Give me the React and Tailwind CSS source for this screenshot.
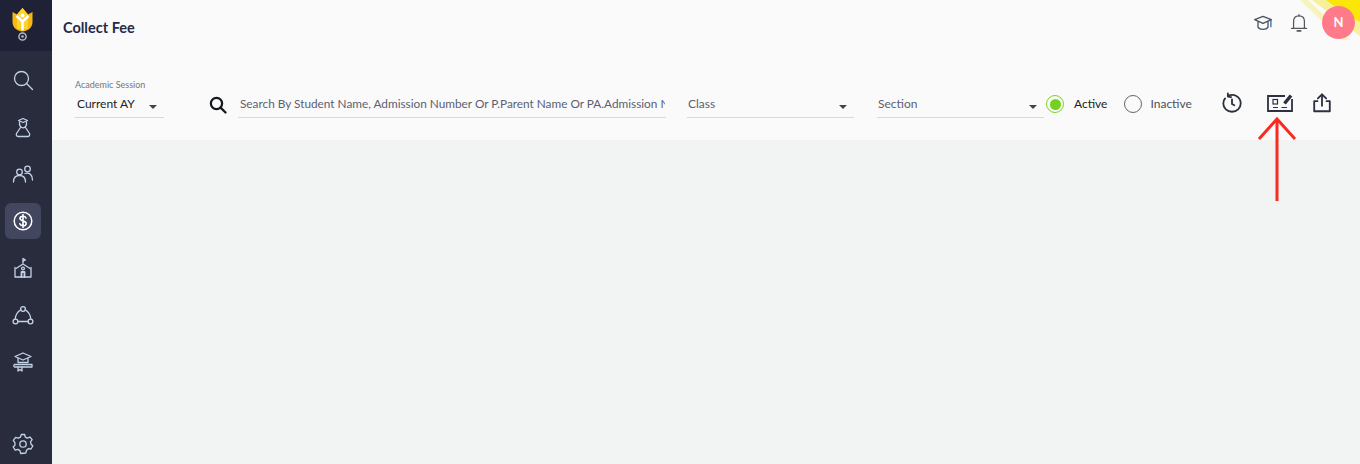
const font = "font-['Lato','Noto_Sans',sans-serif]"

function Caret() {
  return <span className="block w-0 h-0 border-x-[4px] border-x-transparent border-t-[4px] border-t-[#444]" />
}

function NavIcon({ children, active }) {
  return (
    <div className={`w-9 h-9 flex items-center justify-center rounded-md ${active ? 'bg-[#42465f]' : ''}`}>
      <svg width="24" height="24" viewBox="0 0 24 24" fill="none" stroke="#c3d2e6" strokeWidth="1.3" strokeLinecap="round" strokeLinejoin="round">
        {children}
      </svg>
    </div>
  )
}

function Sidebar() {
  return (
    <div className="w-[52px] shrink-0 h-[464px] bg-[#282c3c] flex flex-col items-start">
      <div className="w-full h-[51px] bg-[#1f2137] flex items-start pl-[12px] pt-[7px] shrink-0">
        <svg width="21" height="34" viewBox="0 0 21 34">
          <path d="M0.5 5 L5 7.5 L10.5 1 L16 7.5 L20.5 5 L20.5 15 C20.5 21 15 24.5 10.5 24.5 C6 24.5 0.5 21 0.5 15 Z" fill="#f5b90f" />
          <path d="M5 7.5 L10.5 1 L16 7.5 L16 22 L5 22 Z" fill="#fbd234" />
          <path d="M4.5 9 L10.5 14.5 L16.5 9 M10.5 14.5 L10.5 23.5" stroke="#fff" strokeWidth="2.4" fill="none" />
          <circle cx="10.5" cy="8.5" r="2" fill="#fff" />
          <circle cx="10.5" cy="29.5" r="3.6" fill="none" stroke="#b9b9c2" strokeWidth="1.5" />
          <circle cx="10.5" cy="29.5" r="1.3" fill="#b9b9c2" />
        </svg>
      </div>
      <div className="flex flex-col items-center gap-[11px] mt-[11px] pl-[5px]">
        <NavIcon>
          <circle cx="10.5" cy="10.5" r="7" />
          <path d="M15.8 15.8 L21.5 21.5" />
        </NavIcon>
        <NavIcon>
          <path d="M7.5 5.5 L12 3.5 L16.5 5.5 L12 7.5 Z" />
          <path d="M8.5 7 C8 11 10 12.8 12 12.8 C14 12.8 16 11 15.5 7" />
          <path d="M9.5 12.5 L5.5 18.5 C4.8 20.5 6 21.5 7.5 21.5 L16.5 21.5 C18 21.5 19.2 20.5 18.5 18.5 L14.5 12.5" />
        </NavIcon>
        <NavIcon>
          <circle cx="8.5" cy="10" r="2.8" />
          <circle cx="16.5" cy="7" r="2.8" />
          <path d="M2.5 20 C2.5 15.5 5 13.5 8.5 13.5 C12 13.5 14.5 15.5 14.5 20" />
          <path d="M14 11.5 C18 10 21.5 12.5 21.5 18" />
        </NavIcon>
        <NavIcon active>
          <g stroke="#fff">
            <circle cx="12" cy="12" r="8.8" strokeWidth="1.5" />
            <path d="M15 9 C14.5 7.8 13.4 7.3 12 7.3 C10.3 7.3 9 8.2 9 9.6 C9 12.6 15.2 11.4 15.2 14.4 C15.2 15.8 13.8 16.7 12 16.7 C10.4 16.7 9.2 16 8.8 14.8 M12 5.5 L12 18.5" strokeWidth="1.6" />
          </g>
        </NavIcon>
        <NavIcon>
          <path d="M12 2.5 L14.5 4 L12 5 Z" />
          <path d="M12 5 L12 7" />
          <path d="M5 12.5 L12 8 L19 12.5" />
          <path d="M4 11.5 L4 21 L20 21 L20 11.5" />
          <circle cx="12" cy="12.5" r="1.4" />
          <path d="M10.5 21 L10.5 16 L13.5 16 L13.5 21" strokeWidth="1.8" />
        </NavIcon>
        <NavIcon>
          <circle cx="12" cy="6" r="2.4" />
          <circle cx="4.5" cy="18.5" r="2.4" />
          <circle cx="19.5" cy="18.5" r="2.4" />
          <path d="M7 18.5 L17 18.5 M9.8 6.8 C6.5 8.8 4.5 12 4.2 16 M14.2 6.8 C17.5 8.8 19.5 12 19.8 16" />
        </NavIcon>
        <NavIcon>
          <path d="M12 3 L20 6.5 L12 10 L4 6.5 Z" />
          <path d="M7 8.5 L7 12.5 L17 12.5 L17 8.5" />
          <path d="M3.5 14.5 L21 14.5 L21 17 L3.5 17 C2.5 16.5 2.5 15 3.5 14.5 Z" />
          <path d="M7 17 L7 21 L9 19.5 L11 21 L11 17" />
        </NavIcon>
      </div>
      <div className="mt-auto mb-[2px] pl-[5px]">
        <NavIcon>
          <circle cx="12" cy="12" r="3.2" />
          <path d="M10.3 2.5 L13.7 2.5 L14.3 5.2 L16.4 6.2 L18.9 5 L21.2 7.6 L19.5 9.8 L20 12 L21.8 14 L20 17 L17.5 16.6 L15.6 18.2 L14.8 21 L9.7 21.5 L8.9 18.6 L6.9 17.4 L4.2 18.2 L2.2 15 L4 13 L3.9 10.6 L2.3 8.4 L4.6 5.3 L7.3 6.2 L9.5 5.1 Z" />
        </NavIcon>
      </div>
    </div>
  )
}

function Filter({ label, width }) {
  return (
    <div className={`${width} h-[37px] pt-[10px] pb-[1px] border-b border-[#d9d9d9] flex items-center justify-between pl-[1px] pr-[7px] text-[12px] text-[#5c6070]`}>
      <span>{label}</span>
      <span className="pt-[6px]"><Caret /></span>
    </div>
  )
}

export default function App() {
  return (
    <div className={`relative w-[1360px] h-[464px] overflow-hidden flex bg-[#f2f4f3] ${font}`}>
      <Sidebar />
      <div className="flex-1 flex flex-col">
        <div className="bg-[#fafafa] h-[140px]">
          {/* Header */}
          <div className="flex items-center justify-between h-[51px] pl-[11px] pr-[5px]">
            <h1 className="text-[14.5px] font-bold text-[#232b4b] pt-[4px]">Collect Fee</h1>
            <div className="flex items-center pb-[6px]">
              <svg width="20" height="20" viewBox="0 0 24 24" fill="none" stroke="#4a5160" strokeWidth="1.6" strokeLinejoin="round" className="mr-[16px]">
                <path d="M2 8 L12 4 L22 8 L12 12.5 Z" />
                <path d="M6 10 L6 17 C8 20.5 16 20.5 18 17 L18 10" />
                <path d="M21.5 8.5 L21.5 17" stroke="#3d6da8" />
              </svg>
              <svg width="20" height="22" viewBox="0 0 24 24" fill="none" stroke="#55585f" strokeWidth="1.5" strokeLinecap="round" strokeLinejoin="round" className="mr-[13px]">
                <path d="M5.5 18.5 L5.5 10 C5.5 6 8.2 3.5 12 3.5 C15.8 3.5 18.5 6 18.5 10 L18.5 18.5" />
                <path d="M3 18.5 L21 18.5" />
                <path d="M10 21.5 L14 21.5" strokeWidth="2" />
                <path d="M12 2 L12 3.5" />
              </svg>
              <div className="relative z-10 w-[33px] h-[33px] rounded-full bg-[#ff7b8a] text-white flex items-center justify-center text-[13px] font-bold">N</div>
            </div>
          </div>

          {/* Filter bar */}
          <div className="flex items-start pl-[23px] pt-[30px]">
            <div className="w-[89px] h-[38px] border-b border-[#d9d9d9] mr-[45px] -mt-[1px]">
              <div className="text-[9px] leading-[10px] text-[#777]">Academic Session</div>
              <div className="flex items-center justify-between pl-[2px] pr-[7px] mt-[5px] text-[12px] leading-[18px] text-[#222]">
                <span>Current AY</span>
                <span className="pt-[5px]"><Caret /></span>
              </div>
            </div>
            <svg width="18" height="18" viewBox="0 0 24 24" fill="none" stroke="#15171f" strokeWidth="3" strokeLinecap="round" className="mr-[11px] mt-[15px]">
              <circle cx="10" cy="10" r="7.5" />
              <path d="M15.5 15.5 L22 22" />
            </svg>
            <div className="w-[428px] h-[37px] pt-[10px] pb-[1px] border-b border-[#d9d9d9] mr-[21px] pl-[2px] pr-[1px] flex items-center">
              <input
                readOnly
                className="w-full bg-transparent outline-none text-[11.8px] placeholder:text-[#5c6070]"
                placeholder="Search By Student Name, Admission Number Or P.Parent Name Or PA.Admission Number"
              />
            </div>
            <Filter label="Class" width="w-[167px] mr-[23px]" />
            <Filter label="Section" width="w-[167px] mr-[2px]" />
            <div className="flex items-center h-[28px] mt-[9px] text-[12px]">
              <span className="w-[18px] h-[18px] rounded-full border border-[#7ed321] flex items-center justify-center mr-[10px]">
                <span className="w-[11px] h-[11px] rounded-full bg-[#74d021]" />
              </span>
              <span className="text-[#1c1c1c] mr-[17px]">Active</span>
              <span className="w-[18px] h-[18px] rounded-full border border-[#666] mr-[8px]" />
              <span className="text-[#4c4f5c]">Inactive</span>
            </div>
            <div className="flex items-center mt-[10px] ml-[29px] gap-[18px]">
              <svg width="22" height="22" viewBox="0 0 24 24" fill="none" stroke="#2c3142" strokeWidth="2" strokeLinecap="round" strokeLinejoin="round">
                <path d="M7.5 4.5 C13.5 1 21.5 5 21.5 12.5 C21.5 17.5 17.3 21.5 12 21.5 C6.7 21.5 2.5 17.5 2.5 12.5 C2.5 10.5 3.2 8.5 4.5 7" />
                <path d="M7.5 1.5 L7.5 5 L11 5.5" />
                <path d="M12 8 L12 13 L14.5 14.5" />
              </svg>
              <svg width="26" height="24" viewBox="0 0 26 24" fill="none" stroke="#2c3142" strokeWidth="1.6" className="ml-[6px]">
                <path d="M18 5 L1 5 L1 20 L25 20 L25 8" strokeWidth="1.8" />
                <rect x="6" y="8.5" width="4.5" height="4.5" strokeWidth="1.2" />
                <path d="M6 16.5 L11 16.5 M14.5 16.5 L20 16.5" strokeWidth="1.2" />
                <path d="M17.5 12.5 L24 4.5" strokeWidth="3.4" />
              </svg>
              <svg width="22" height="22" viewBox="0 0 24 24" fill="none" stroke="#2c3142" strokeWidth="2" strokeLinecap="round" strokeLinejoin="round">
                <path d="M7 10 L3.5 10 L3.5 21 L20.5 21 L20.5 10 L17 10" />
                <path d="M12 15 L12 3" />
                <path d="M7.5 7 L12 2.5 L16.5 7" />
              </svg>
            </div>
          </div>
        </div>
      </div>

      {/* Yellow corner decoration */}
      <svg className="absolute top-0 right-0" width="60" height="40" viewBox="0 0 60 40">
        <path d="M0 0 L8 0 L50 40 L42 40 Z" fill="#f6f2a8" opacity="0.8" />
        <path d="M12 0 L60 0 L60 36 Z" fill="#f7f09a" />
        <path d="M26 0 L60 0 L60 22 L48 16 Z" fill="#fbe60a" />
      </svg>

      {/* Red annotation arrow */}
      <svg className="absolute left-[1255px] top-[115px]" width="44" height="88" viewBox="0 0 44 88" fill="none" stroke="#fb2a20" strokeWidth="3">
        <path d="M22 86 L22 4" />
        <path d="M4 24 L22 4 L40 24" />
      </svg>
    </div>
  )
}
